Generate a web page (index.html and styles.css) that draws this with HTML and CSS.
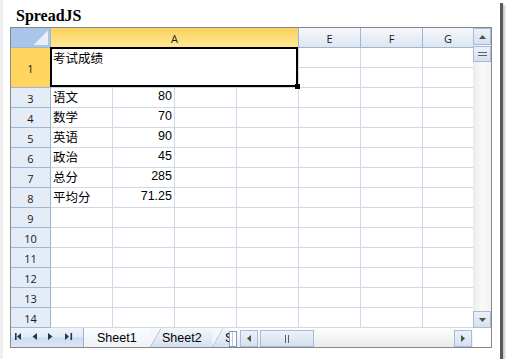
FILE: index.html
```html
<!DOCTYPE html>
<html lang="zh">
<head>
<meta charset="utf-8">
<title>SpreadJS</title>
<link rel="stylesheet" href="styles.css">
</head>
<body>
<div class="frame">
  <h1 class="title">SpreadJS</h1>
  <div class="spread">
    <div class="main">
      <div class="grid">
        <div class="corner"></div>
        <div class="ch sel">A</div>
        <div class="ch">E</div>
        <div class="ch">F</div>
        <div class="ch g">G</div>

        <div class="rh sel">1</div>
        <div class="c merged">考试成绩</div>
        <div class="c"></div><div class="c"></div><div class="c g"></div>
        <div class="c"></div><div class="c"></div><div class="c g"></div>

        <div class="rh">3</div><div class="c t">语文</div><div class="c n">80</div><div class="c"></div><div class="c"></div><div class="c"></div><div class="c"></div><div class="c g"></div>
        <div class="rh">4</div><div class="c t">数学</div><div class="c n">70</div><div class="c"></div><div class="c"></div><div class="c"></div><div class="c"></div><div class="c g"></div>
        <div class="rh">5</div><div class="c t">英语</div><div class="c n">90</div><div class="c"></div><div class="c"></div><div class="c"></div><div class="c"></div><div class="c g"></div>
        <div class="rh">6</div><div class="c t">政治</div><div class="c n">45</div><div class="c"></div><div class="c"></div><div class="c"></div><div class="c"></div><div class="c g"></div>
        <div class="rh">7</div><div class="c t">总分</div><div class="c n">285</div><div class="c"></div><div class="c"></div><div class="c"></div><div class="c"></div><div class="c g"></div>
        <div class="rh">8</div><div class="c t">平均分</div><div class="c n">71.25</div><div class="c"></div><div class="c"></div><div class="c"></div><div class="c"></div><div class="c g"></div>
        <div class="rh">9</div><div class="c"></div><div class="c"></div><div class="c"></div><div class="c"></div><div class="c"></div><div class="c"></div><div class="c g"></div>
        <div class="rh">10</div><div class="c"></div><div class="c"></div><div class="c"></div><div class="c"></div><div class="c"></div><div class="c"></div><div class="c g"></div>
        <div class="rh">11</div><div class="c"></div><div class="c"></div><div class="c"></div><div class="c"></div><div class="c"></div><div class="c"></div><div class="c g"></div>
        <div class="rh">12</div><div class="c"></div><div class="c"></div><div class="c"></div><div class="c"></div><div class="c"></div><div class="c"></div><div class="c g"></div>
        <div class="rh">13</div><div class="c"></div><div class="c"></div><div class="c"></div><div class="c"></div><div class="c"></div><div class="c"></div><div class="c g"></div>
        <div class="rh">14</div><div class="c"></div><div class="c"></div><div class="c"></div><div class="c"></div><div class="c"></div><div class="c"></div><div class="c g"></div>
      </div>
      <div class="vscroll">
        <div class="sbtn vbtn"><svg width="7" height="4" viewBox="0 0 7 4"><polygon points="0,4 3.5,0 7,4" fill="#4b5540"/></svg></div>
        <div class="sbtn vthumb"><svg width="9" height="4" viewBox="0 0 9 4"><rect x="0" y="0" width="9" height="1" fill="#5b6450"/><rect x="0" y="3" width="9" height="1" fill="#5b6450"/></svg></div>
        <div class="vtrack"></div>
        <div class="sbtn vbtn"><svg width="7" height="4" viewBox="0 0 7 4"><polygon points="0,0 7,0 3.5,4" fill="#4b5540"/></svg></div>
      </div>
    </div>
    <div class="bottom">
      <div class="nav">
        <svg width="72" height="19" viewBox="0 0 72 19">
          <g fill="#1f3659">
            <rect x="4" y="5" width="1.6" height="7"/>
            <polygon points="10,5 6,8.5 10,12"/>
            <polygon points="26,5 21.5,8.5 26,12"/>
            <polygon points="37,5 41.5,8.5 37,12"/>
            <polygon points="54,5 58,8.5 54,12"/>
            <rect x="59.5" y="5" width="1.6" height="7"/>
          </g>
        </svg>
      </div>
      <div class="tabs">
        <div class="tab active">Sheet1</div>
        <div class="tab t2">Sheet2</div>
        <div class="tab t3">Sheet3</div>
      </div>
      <div class="splitter"></div>
      <div class="hscroll">
        <div class="sbtn hbtn left"><svg width="4" height="7" viewBox="0 0 4 7"><polygon points="4,0 0,3.5 4,7" fill="#4b5540"/></svg></div>
        <div class="sbtn hthumb"><svg width="4" height="8" viewBox="0 0 4 8"><rect x="0" y="0" width="1" height="8" fill="#5b6450"/><rect x="3" y="0" width="1" height="8" fill="#5b6450"/></svg></div>
        <div class="htrack"></div>
        <div class="sbtn hbtn right"><svg width="4" height="7" viewBox="0 0 4 7"><polygon points="0,0 4,3.5 0,7" fill="#4b5540"/></svg></div>
      </div>
      <div class="corner-br"></div>
    </div>
  </div>
</div>
</body>
</html>
```

FILE: styles.css
```css
* { box-sizing: border-box; }
html, body { margin: 0; padding: 0; }
body {
  background: #fff;
  font-family: "Liberation Sans", Arial, sans-serif;
  color: #000;
}
.frame {
  width: 500px;
  height: 359px;
  background: #fff;
  border-left: 3px solid #efefef;
  padding-left: 7px;
  box-shadow: 3px 3px 0 #5a5a5a, 5px 5px 2px #c8c8c8;
}
.title {
  margin: 0;
  padding: 6px 0 0 6px;
  height: 26px;
  font: bold 16px/20px "Liberation Serif", "Times New Roman", serif;
}
.spread {
  margin-top: 1px;
  width: 482px;
  height: 321px;
  border: 1px solid #878787;
  display: flex;
  flex-direction: column;
}
.main { display: flex; height: 300px; }
.grid {
  width: 462px;
  display: grid;
  grid-template-columns: 40px repeat(6, 62px) 50px;
  grid-template-rows: repeat(15, 20px);
}
.c {
  border-right: 1px solid #d0d7e5;
  border-bottom: 1px solid #d0d7e5;
  white-space: nowrap;
  overflow: visible;
}
.c.g { border-right: 0; }
.t {
  font: 12.5px/17px "Noto Sans CJK SC", sans-serif;
  padding-left: 2px;
}
.n {
  font: 12.5px/17px "Liberation Sans", Arial, sans-serif;
  text-align: right;
  padding-right: 2px;
}
.merged {
  grid-column: span 4;
  grid-row: span 2;
  position: relative;
  font: 12.5px/17px "Noto Sans CJK SC", sans-serif;
  padding: 1px 2px 0;
}
.merged::after {
  content: "";
  position: absolute;
  left: -1px;
  top: -1px;
  right: 0;
  bottom: 0;
  border: 2px solid #000;
}
.merged::before {
  content: "";
  position: absolute;
  right: -2px;
  bottom: -2px;
  width: 5px;
  height: 5px;
  background: #000;
  z-index: 1;
}
.corner {
  background:
    linear-gradient(to top left, #e8eff9 50%, transparent 50%) no-repeat right 2px bottom 2px / 14px 15px,
    #a9c5ea;
  border-right: 1px solid #9eb6ce;
  border-bottom: 1px solid #9eb6ce;
}
.ch, .rh {
  font: 11px/17px "Open Sans", "Noto Sans", sans-serif;
  color: #1a1a1a;
  text-align: center;
  padding-top: 2px;
  border-right: 1px solid #9eb6ce;
  border-bottom: 1px solid #9eb6ce;
}
.ch { background: linear-gradient(#f5f8fc, #dde6f1); }
.ch.g { border-right: 0; }
.ch.sel {
  grid-column: span 4;
  background: linear-gradient(#f9d25d, #ffe894);
}
.rh { background: #e4ecf7; }
.rh.sel {
  grid-row: span 2;
  background: #ffd55f;
  display: flex;
  align-items: center;
  justify-content: center;
}
.vscroll {
  width: 18px;
  display: flex;
  flex-direction: column;
  background: linear-gradient(to right, #ebebeb, #f9f9f9 50%, #f3f3f3);
}
.sbtn {
  border: 1px solid #a5bbd8;
  background: linear-gradient(#ebf1f9, #d5e0f0);
  display: flex;
  align-items: center;
  justify-content: center;
  flex: none;
}
.vbtn { height: 17px; }
.vthumb { height: 16px; margin-top: 1px; }
.vtrack { flex: 1; }
.bottom { display: flex; height: 19px; }
.nav {
  width: 73px;
  flex: none;
  border-right: 1px solid #9db3d0;
  background: linear-gradient(#eef3fa 0%, #e3ebf6 45%, #cddcf0 52%, #dce7f5 100%);
}
.nav svg { display: block; }
.tabs {
  width: 145px;
  flex: none;
  display: flex;
  overflow: hidden;
  background: linear-gradient(#f7f9fb, #eef2f7);
}
.tab {
  flex: none;
  font: 12.5px/17px "Liberation Sans", Arial, sans-serif;
  padding-top: 2px;
  white-space: nowrap;
  color: #000;
}
.tab.active {
  width: 66px;
  padding-left: 13px;
  background: linear-gradient(#fbfcfd, #eff2f6);
}
.t2, .t3 {
  clip-path: polygon(0 100%, 11px 0, 100% 0, 100% 100%);
  background:
    linear-gradient(to top left, transparent calc(50% - 0.8px), #8c9fba 50%, transparent calc(50% + 0.8px)) no-repeat left top / 11px 100%,
    linear-gradient(#f4f7fb, #d3e0f2);
}
.t2 { width: 62px; padding-left: 12px; }
.t3 { width: 50px; padding-left: 13px; }
.splitter {
  width: 8px;
  flex: none;
  margin-top: 3px;
  border: 1px solid #7b9bc8;
  background: linear-gradient(to right, #fff 2px, #b9cde8 2px, #b9cde8 3px, #fff 3px);
}
.hscroll {
  width: 236px;
  flex: none;
  display: flex;
  align-items: flex-end;
  background: linear-gradient(#ffffff, #e9e9e9);
}
.hbtn { width: 18px; height: 17px; }
.hbtn.left { margin-left: 3px; }
.hbtn.right { margin-right: 1px; }
.hthumb { width: 54px; height: 17px; margin-left: 2px; }
.htrack { flex: 1; }
.corner-br { width: 18px; flex: none; background: #fff; }
```
